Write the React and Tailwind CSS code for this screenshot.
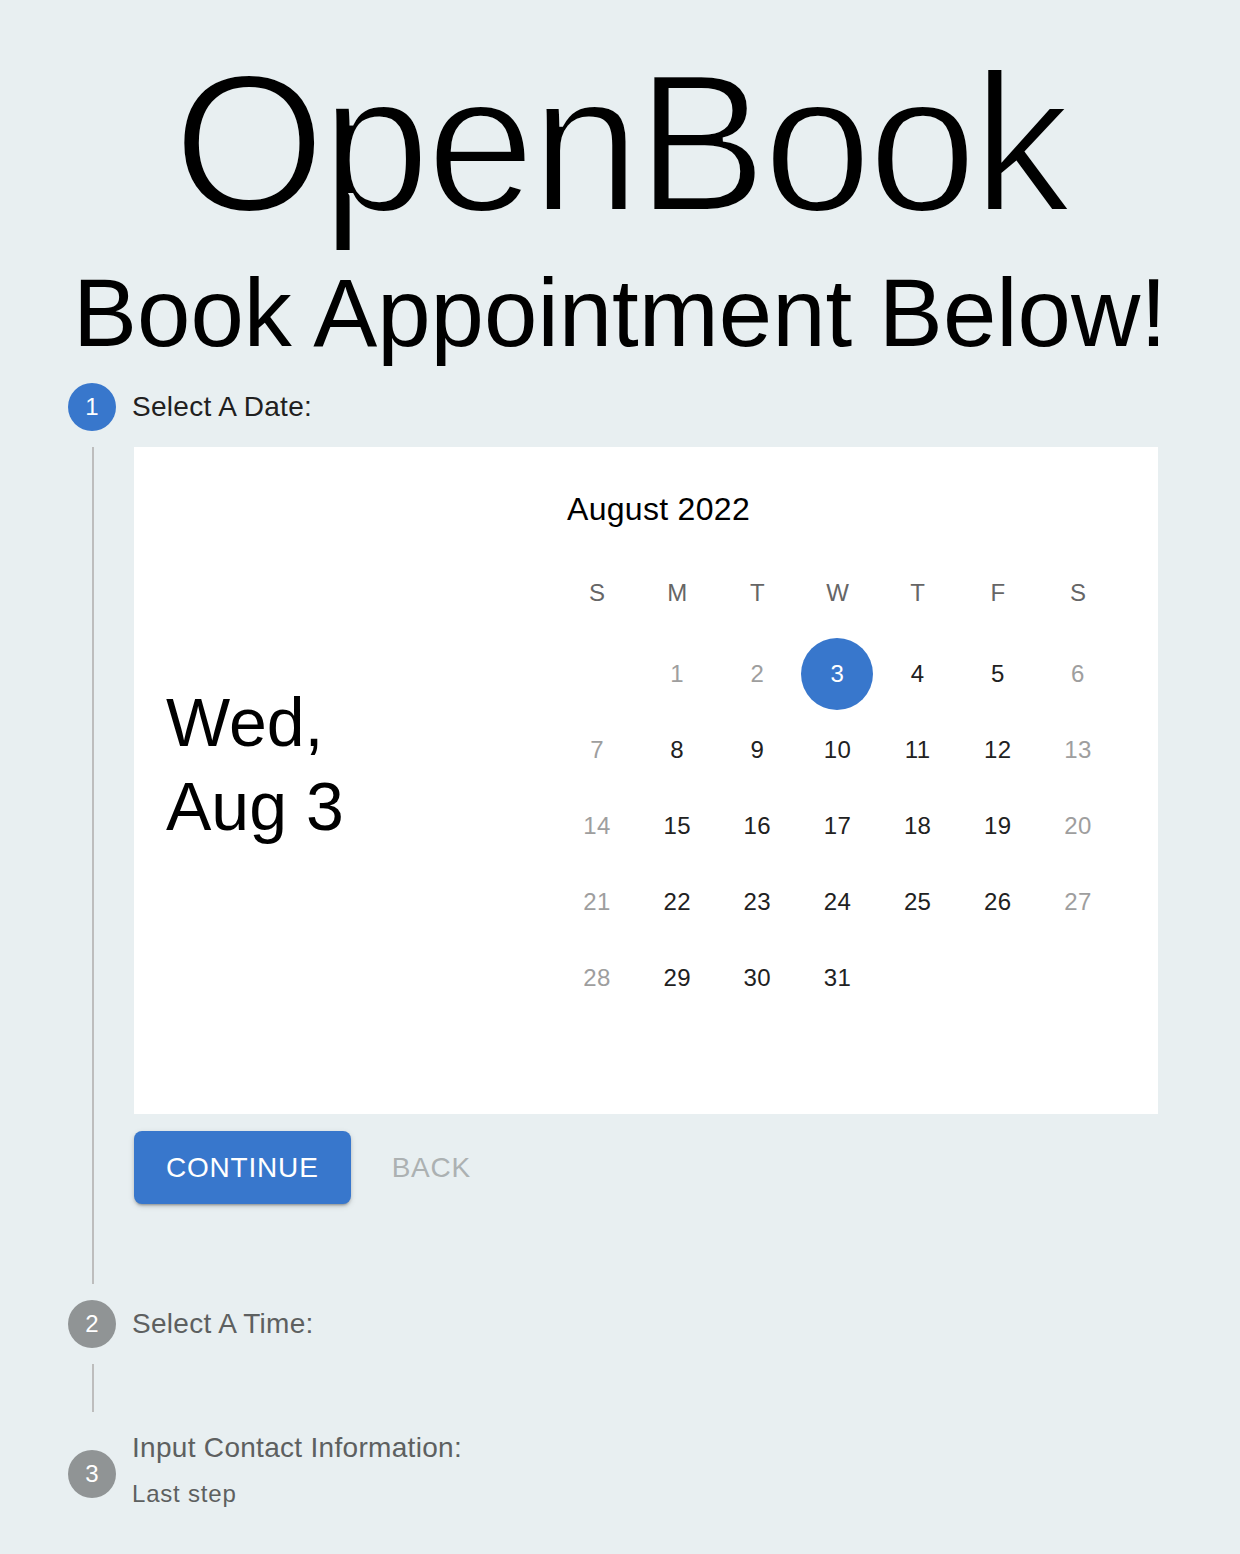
import React from 'react';

const BLUE = 'bg-[#3877cc]';

const weeks = [
    [null, 1, 2, 3, 4, 5, 6],
    [7, 8, 9, 10, 11, 12, 13],
    [14, 15, 16, 17, 18, 19, 20],
    [21, 22, 23, 24, 25, 26, 27],
    [28, 29, 30, 31, null, null, null],
];

const StepIcon = ({ n, active }) => (
    <div className={`w-12 h-12 rounded-full flex items-center justify-center text-white text-[24px] shrink-0 ${active ? BLUE : 'bg-[#909495]'}`}>
        {n}
    </div>
);

const DayCell = ({ day, col }) => {
    if (!day) return <div />;
    const selected = day === 3;
    const disabled = day < 3 || col === 0 || col === 6;
    return (
        <div className="flex items-center justify-center">
            <div
                className={`w-[72px] h-[72px] rounded-full flex items-center justify-center text-[24px] tracking-[0.4px] ${
                    selected ? `${BLUE} text-white` : disabled ? 'text-[#9e9e9e]' : 'text-[#212121]'
                }`}
            >
                {day}
            </div>
        </div>
    );
};

const Calendar = () => (
    <div className="flex-1 pt-[46px]">
        {/* header */}
        <div className="h-8 pl-[50px] text-[32px] leading-8 tracking-[0.3px] text-black">August 2022</div>

        {/* weekdays */}
        <div className="mt-12 h-10 grid grid-cols-7 px-10 text-[24px] text-[#666666]">
            {['S', 'M', 'T', 'W', 'T', 'F', 'S'].map((d, i) => (
                <div key={i} className="flex items-center justify-center">{d}</div>
            ))}
        </div>

        {/* days */}
        <div className="mt-[25px] flex flex-col gap-1 px-10">
            {weeks.map((w, wi) => (
                <div key={wi} className="grid grid-cols-7 h-[72px]">
                    {w.map((d, ci) => <DayCell key={ci} day={d} col={ci} />)}
                </div>
            ))}
        </div>
    </div>
);

export default function App() {
    return (
        <div className="min-h-screen bg-[#e8eff1] font-['Liberation_Sans',Arial,sans-serif] pb-6">
            {/* Title */}
            <h1 className="pt-[46px] text-center text-[196px] leading-none tracking-[-4px] text-black [-webkit-text-stroke:4px_#e8eff1]">
                OpenBook
            </h1>
            <h2 className="mt-[23px] text-center text-[96px] leading-none text-black">Book Appointment Below!</h2>

            {/* Stepper */}
            <div className="mt-[6px] pl-[68px] pr-[82px]">
                {/* Step 1 */}
                <div className="flex items-center gap-4 py-4">
                    <StepIcon n={1} active />
                    <span className="text-[28px] tracking-[0.3px] text-[#1f2020]">Select A Date:</span>
                </div>
                <div className="ml-6 border-l-2 border-[#bdbdbd] pl-10 pb-[80px]">
                    <div className="bg-white h-[667px] flex">
                        <div className="w-[383px] pl-8 pt-[233px] text-[68px] leading-[84px] text-black">
                            <div>Wed,</div>
                            <div>Aug 3</div>
                        </div>
                        <Calendar />
                    </div>
                    <div className="mt-[17px] flex items-center">
                        <button className={`h-[73px] px-8 rounded-lg ${BLUE} text-white text-[28px] tracking-[0.8px] shadow-[0_3px_2px_-2px_rgba(0,0,0,0.2),0_2px_3px_0_rgba(0,0,0,0.14),0_2px_6px_0_rgba(0,0,0,0.12)]`}>
                            CONTINUE
                        </button>
                        <span className="ml-[41px] text-[28px] tracking-[0.8px] text-[#acb1b2]">BACK</span>
                    </div>
                </div>

                {/* Step 2 */}
                <div className="flex items-center gap-4 py-4">
                    <StepIcon n={2} />
                    <span className="text-[28px] tracking-[0.3px] text-[#5d6060]">Select A Time:</span>
                </div>
                <div className="ml-6 h-12 border-l-2 border-[#bdbdbd]" />

                {/* Step 3 */}
                <div className="flex items-center gap-4 py-4">
                    <StepIcon n={3} />
                    <div className="flex flex-col text-[#5d6060]">
                        <span className="text-[28px] leading-10 tracking-[0.3px]">Input Contact Information:</span>
                        <span className="text-[24px] leading-[52px] tracking-[0.8px]">Last step</span>
                    </div>
                </div>
            </div>
        </div>
    );
}
